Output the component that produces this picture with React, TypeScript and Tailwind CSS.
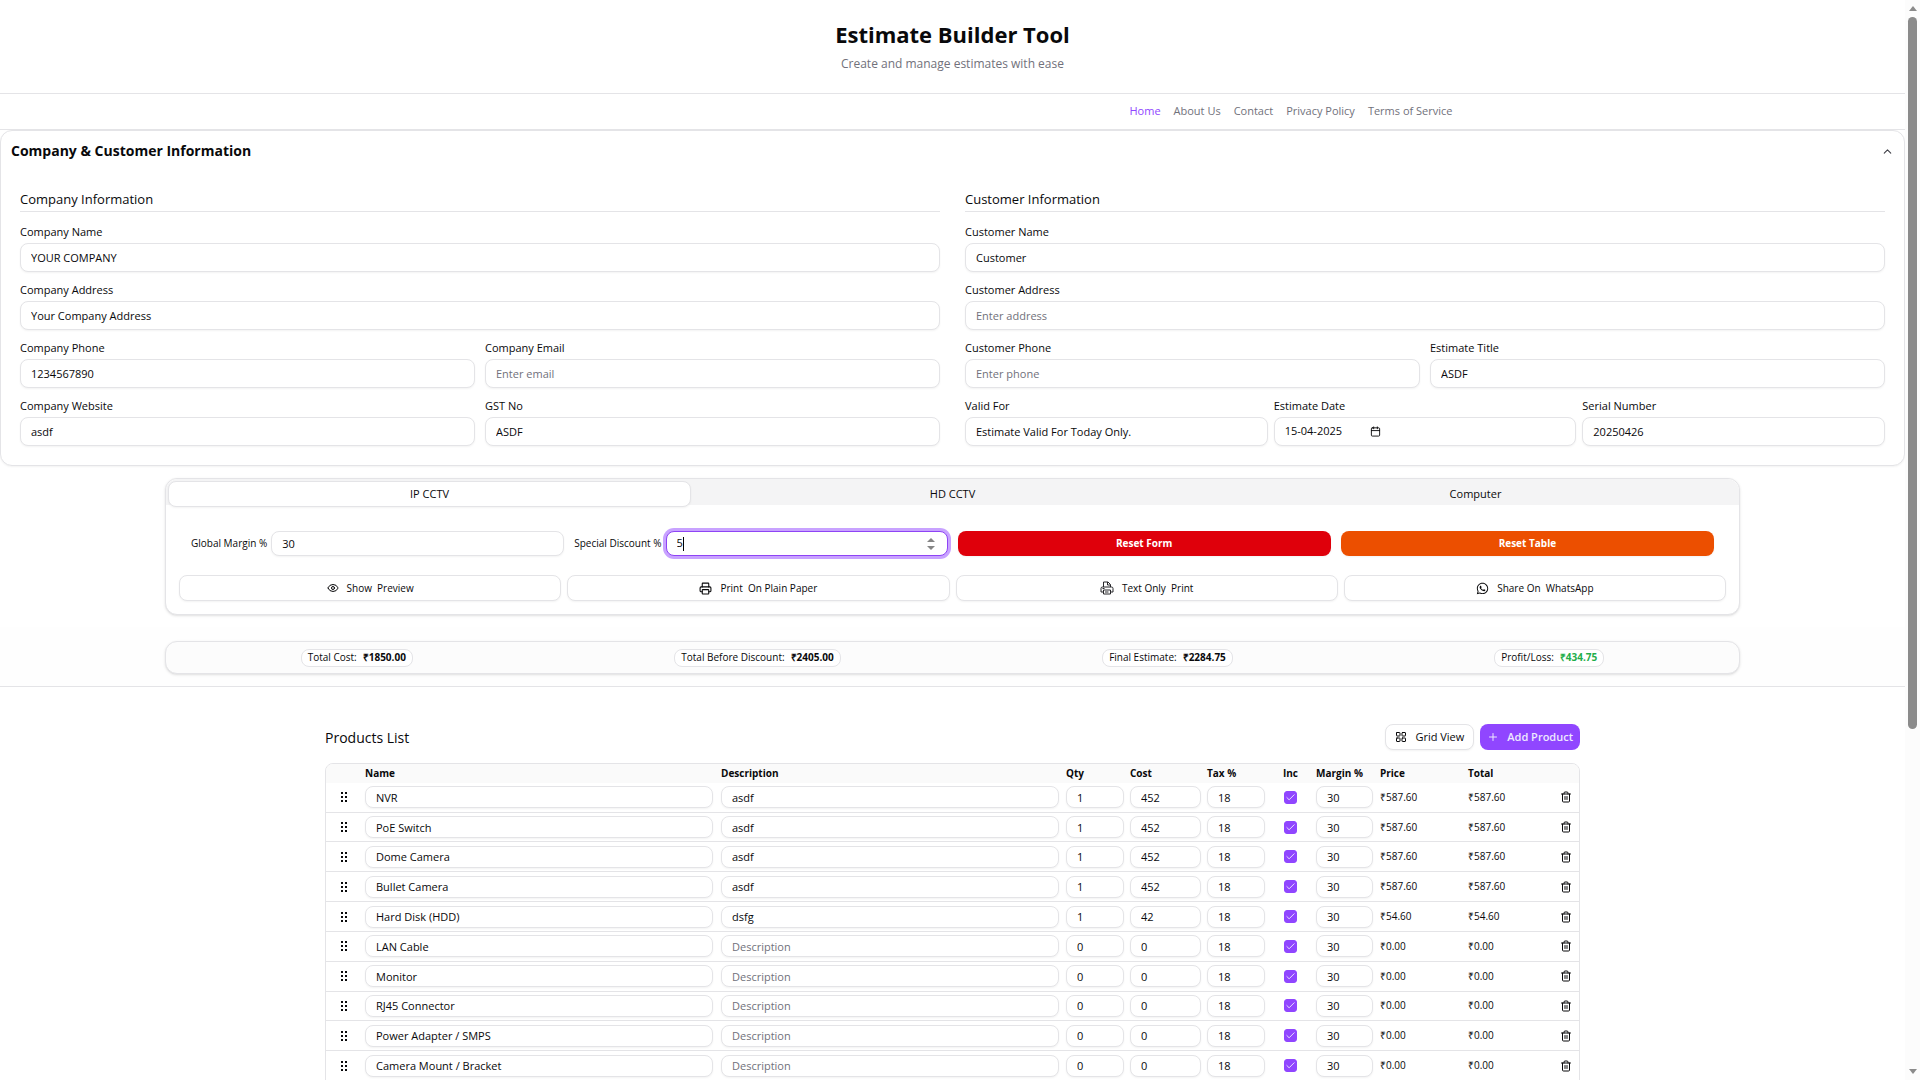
import React, { useState } from 'react';
import { Calendar, Check, ChevronUp, Eye, LayoutGrid, Plus, Printer, Trash2 } from 'lucide-react';
import { FaWhatsapp } from 'react-icons/fa';

interface FieldProps {
  id: string;
  label: string;
  value?: string;
  placeholder?: string;
}

const navLinks = ['Home', 'About Us', 'Contact', 'Privacy Policy', 'Terms of Service'];
const tabs = ['IP CCTV', 'HD CCTV', 'Computer'];

const products = [
  { name: 'NVR', desc: 'asdf', qty: 1, cost: 452, total: '587.60' },
  { name: 'PoE Switch', desc: 'asdf', qty: 1, cost: 452, total: '587.60' },
  { name: 'Dome Camera', desc: 'asdf', qty: 1, cost: 452, total: '587.60' },
  { name: 'Bullet Camera', desc: 'asdf', qty: 1, cost: 452, total: '587.60' },
  { name: 'Hard Disk (HDD)', desc: 'dsfg', qty: 1, cost: 42, total: '54.60' },
  { name: 'LAN Cable', desc: '', qty: 0, cost: 0, total: '0.00' },
  { name: 'Monitor', desc: '', qty: 0, cost: 0, total: '0.00' },
  { name: 'RJ45 Connector', desc: '', qty: 0, cost: 0, total: '0.00' },
  { name: 'Power Adapter / SMPS', desc: '', qty: 0, cost: 0, total: '0.00' },
  { name: 'Camera Mount / Bracket', desc: '', qty: 0, cost: 0, total: '0.00' },
];

const inputBase =
  'w-full min-w-0 rounded-lg border border-zinc-200 bg-white px-2.5 text-[11px] shadow-xs outline-none placeholder:text-zinc-500';

function Field({ id, label, value, placeholder }: FieldProps) {
  return (
    <div className="min-w-0">
      <label htmlFor={id} className="mb-[3px] block text-[11px] leading-4 font-medium">{label}</label>
      <input id={id} defaultValue={value} placeholder={placeholder} className={`${inputBase} h-[29px]`} />
    </div>
  );
}

function DateField({ id, label, value }: FieldProps) {
  return (
    <div className="min-w-0">
      <label htmlFor={id} className="mb-[3px] block text-[11px] leading-4 font-medium">{label}</label>
      <div className="flex h-[29px] items-center rounded-lg border border-zinc-200 bg-white px-2.5 shadow-xs">
        <input id={id} defaultValue={value} className="w-[85px] text-[11px] outline-none" />
        <button type="button" aria-label="Pick a date">
          <Calendar size={11} />
        </button>
      </div>
    </div>
  );
}

function CellInput({ label, value, placeholder }: { label: string; value: string | number; placeholder?: string }) {
  return (
    <input aria-label={label} defaultValue={value} placeholder={placeholder} className={`${inputBase} block h-[22px]`} />
  );
}

function ActionButton({ icon, children }: { icon: React.ReactNode; children: React.ReactNode }) {
  return (
    <button
      type="button"
      className="flex h-[26px] items-center justify-center gap-2 rounded-lg border border-zinc-200 bg-white text-[10px] font-medium shadow-xs"
    >
      {icon}
      {children}
    </button>
  );
}

function Badge({ label, value, className = '' }: { label: string; value: string; className?: string }) {
  return (
    <div className="flex h-[18px] items-center gap-1.5 rounded-lg border border-zinc-200 bg-white px-1.5 text-[10px]">
      <span>{label}</span>
      <span className={`font-bold ${className}`}>{value}</span>
    </div>
  );
}

function DragHandle() {
  return (
    <svg width="6" height="10" viewBox="0 0 6 10" fill="currentColor" className="mx-auto">
      {[0, 4, 8].map(y => (
        <g key={y}>
          <rect x="0" y={y} width="2" height="2" />
          <rect x="4" y={y} width="2" height="2" />
        </g>
      ))}
    </svg>
  );
}

function DocumentPrinter() {
  return (
    <svg width="14" height="14" viewBox="0 0 28 28" fill="none" stroke="currentColor" strokeWidth="2" strokeLinejoin="round" className="text-zinc-800">
      <path d="M7 12V2h9l5 5v5" />
      <path d="M15 2v6h6" />
      <path d="M7 22H2V15a3 3 0 0 1 3-3h18a3 3 0 0 1 3 3v7h-5" />
      <path d="M7 18h14v8H7z" />
      <path d="M10 22h7M5 15h4" />
    </svg>
  );
}

function InfoCard() {
  return (
    <section className="rounded-xl border border-zinc-200 bg-white pb-[19px] shadow-xs">
      <div className="flex h-10 items-center justify-between px-2.5">
        <h2 className="text-sm font-bold">Company &amp; Customer Information</h2>
        <button type="button" aria-label="Collapse" className="text-zinc-700">
          <ChevronUp size={13} />
        </button>
      </div>
      <div className="grid grid-cols-2 gap-[25px] px-[19px] pt-[19px]">
        <div className="flex flex-col gap-2.5">
          <h3 className="mb-0.5 border-b border-zinc-200 pb-[3px] text-[13px] leading-[18px] font-medium">Company Information</h3>
          <Field id="company-name" label="Company Name" value="YOUR COMPANY" />
          <Field id="company-address" label="Company Address" value="Your Company Address" />
          <div className="grid grid-cols-2 gap-2.5">
            <Field id="company-phone" label="Company Phone" value="1234567890" />
            <Field id="company-email" label="Company Email" placeholder="Enter email" />
          </div>
          <div className="grid grid-cols-2 gap-2.5">
            <Field id="company-website" label="Company Website" value="asdf" />
            <Field id="gst-no" label="GST No" value="ASDF" />
          </div>
        </div>
        <div className="flex flex-col gap-2.5">
          <h3 className="mb-0.5 border-b border-zinc-200 pb-[3px] text-[13px] leading-[18px] font-medium">Customer Information</h3>
          <Field id="customer-name" label="Customer Name" value="Customer" />
          <Field id="customer-address" label="Customer Address" placeholder="Enter address" />
          <div className="grid grid-cols-2 gap-2.5">
            <Field id="customer-phone" label="Customer Phone" placeholder="Enter phone" />
            <Field id="estimate-title" label="Estimate Title" value="ASDF" />
          </div>
          <div className="grid grid-cols-3 gap-1.5">
            <Field id="valid-for" label="Valid For" value="Estimate Valid For Today Only." />
            <DateField id="estimate-date" label="Estimate Date" value="15-04-2025" />
            <Field id="serial-number" label="Serial Number" value="20250426" />
          </div>
        </div>
      </div>
    </section>
  );
}

function Controls() {
  const [active, setActive] = useState('IP CCTV');

  return (
    <section className="mx-auto mt-3 w-full max-w-[1575px] rounded-xl border border-zinc-200 bg-white shadow-sm">
      <div role="tablist" className="grid h-[26px] grid-cols-3 rounded-t-xl bg-zinc-100 px-0.5 pt-0.5">
        {tabs.map(tab => (
          <button
            key={tab}
            type="button"
            role="tab"
            aria-selected={tab === active}
            onClick={() => setActive(tab)}
            className={`h-[26px] rounded-lg text-[11px] font-medium ${tab === active ? 'border border-zinc-200 bg-white shadow-xs' : ''}`}
          >
            {tab}
          </button>
        ))}
      </div>
      <div className="grid grid-cols-4 gap-2.5 px-[25px] pt-[26px]">
        <div className="flex items-center gap-1">
          <label htmlFor="global-margin" className="shrink-0 text-[10px] font-medium">Global Margin %</label>
          <input id="global-margin" defaultValue="30" className={`${inputBase} h-[25px]`} />
        </div>
        <div className="flex items-center gap-1">
          <label htmlFor="special-discount" className="shrink-0 text-[10px] font-medium">Special Discount %</label>
          <div className="flex h-[25px] flex-1 items-center rounded-lg border border-[#8e44f5] bg-white px-2.5 ring-3 ring-[#c8a2ff]">
            <input id="special-discount" defaultValue="5" className="field-sizing-content text-[11px] outline-none" />
            <span className="h-3.5 w-px bg-black" />
            <svg width="8" height="14" viewBox="0 0 8 14" fill="#858585" className="mr-0.5 ml-auto">
              <path d="M0 5L4 1L8 5Z M0 9L4 13L8 9Z" />
            </svg>
          </div>
        </div>
        <button type="button" className="h-[25px] rounded-lg bg-[#df000b] text-[10px] font-bold text-white shadow-xs">Reset Form</button>
        <button type="button" className="h-[25px] rounded-lg bg-[#ec4f00] text-[10px] font-bold text-white shadow-xs">Reset Table</button>
      </div>
      <div className="grid grid-cols-4 gap-1.5 px-[13px] pt-[19px] pb-[13px]">
        <ActionButton icon={<Eye size={12} />}><span>Show&nbsp; Preview</span></ActionButton>
        <ActionButton icon={<Printer size={13} />}><span>Print&nbsp; On Plain Paper</span></ActionButton>
        <ActionButton icon={<DocumentPrinter />}><span>Text Only&nbsp; Print</span></ActionButton>
        <ActionButton icon={<FaWhatsapp size={13} />}><span>Share On&nbsp; WhatsApp</span></ActionButton>
      </div>
    </section>
  );
}

function Products() {
  return (
    <section className="mx-auto w-full max-w-[1255px] pt-[37px]">
      <div className="flex items-center justify-between">
        <h2 className="text-[14px] font-medium">Products List</h2>
        <div className="flex gap-1.5">
          <button type="button" className="flex h-[26px] items-center gap-2 rounded-lg border border-zinc-200 bg-white px-[9px] text-[11px] font-medium shadow-xs">
            <LayoutGrid size={12} />
            Grid View
          </button>
          <button type="button" className="flex h-[26px] items-center gap-2 rounded-lg bg-[#9046ff] px-[7px] text-[11px] font-semibold text-violet-100">
            <Plus size={12} />
            Add Product
          </button>
        </div>
      </div>
      <div className="mt-[13px] overflow-hidden rounded-t-lg border border-zinc-200">
        <table className="h-[317px] w-full table-fixed text-left text-[10px]">
          <thead className="bg-zinc-50">
            <tr className="h-[19px]">
              <th className="w-[35px]" aria-label="Move" />
              <th className="px-1 font-bold">Name</th>
              <th className="w-[346px] px-1 font-bold">Description</th>
              <th className="w-16 px-[3px] font-bold">Qty</th>
              <th className="w-[77px] px-[3px] font-bold">Cost</th>
              <th className="w-16 px-[3px] font-bold">Tax %</th>
              <th className="w-[45px] text-center font-bold">Inc</th>
              <th className="w-[63px] px-[3px] font-bold">Margin %</th>
              <th className="w-[88px] px-1 font-bold">Price</th>
              <th className="w-[88px] px-1 font-bold">Total</th>
              <th className="w-[27px]" aria-label="Remove" />
            </tr>
          </thead>
          <tbody>
            {products.map(p => (
              <tr key={p.name} className="border-b border-zinc-200">
                <td><DragHandle /></td>
                <td className="px-1"><CellInput label="Name" value={p.name} /></td>
                <td className="px-1"><CellInput label="Description" value={p.desc} placeholder="Description" /></td>
                <td className="px-[3px]"><CellInput label="Quantity" value={p.qty} /></td>
                <td className="px-[3px]"><CellInput label="Cost" value={p.cost} /></td>
                <td className="px-[3px]"><CellInput label="Tax" value={18} /></td>
                <td>
                  <span className="mx-auto grid size-[13px] place-items-center">
                    <input
                      type="checkbox"
                      defaultChecked
                      aria-label="Include"
                      className="col-start-1 row-start-1 size-[13px] appearance-none rounded-[3px] border border-zinc-300 checked:border-[#9046ff] checked:bg-[#9046ff]"
                    />
                    <Check size={11} className="pointer-events-none col-start-1 row-start-1 text-violet-100" />
                  </span>
                </td>
                <td className="px-[3px]"><CellInput label="Margin" value={30} /></td>
                <td className="px-1">₹{p.total}</td>
                <td className="px-1">₹{p.total}</td>
                <td>
                  <button type="button" aria-label="Delete" className="mx-auto block">
                    <Trash2 size={12} />
                  </button>
                </td>
              </tr>
            ))}
          </tbody>
        </table>
      </div>
    </section>
  );
}

function ScrollRail() {
  return (
    <div className="flex w-[15px] shrink-0 flex-col items-center bg-[#fcfcfc] py-1.5 text-[#8b8b8b]">
      <svg width="8" height="5" viewBox="0 0 8 5" fill="currentColor"><path d="M0 5L4 0L8 5Z" /></svg>
      <div className="mt-1.5 h-[712px] w-[9px] rounded-full bg-[#8b8b8b]" />
      <svg width="8" height="5" viewBox="0 0 8 5" fill="currentColor" className="mt-auto"><path d="M0 0L4 5L8 0Z" /></svg>
    </div>
  );
}

export default function App() {
  return (
    <div className="flex h-screen overflow-hidden bg-white font-['Open_Sans',sans-serif] text-zinc-950">
      <main className="min-w-0 flex-1 overflow-hidden">
        <header className="flex h-[94px] flex-col items-center border-b border-zinc-200 pt-[18px] text-center">
          <h1 className="text-[22px] leading-8 font-bold">Estimate Builder Tool</h1>
          <p className="mt-1 text-[12px] leading-5 text-zinc-500">Create and manage estimates with ease</p>
        </header>
        <div className="border-b border-zinc-200">
          <nav className="mx-auto flex h-[35px] max-w-5xl items-center justify-end gap-[13px] px-3 text-[11px] font-medium text-zinc-500">
            {navLinks.map(link => (
              <a key={link} href="#" className={link === 'Home' ? 'text-[#9046ff]' : ''}>{link}</a>
            ))}
          </nav>
        </div>
        <InfoCard />
        <Controls />
        <div className="mt-3 border-b border-zinc-200 bg-[#fefefe] pt-3.5 pb-3">
          <div className="mx-auto flex h-[33px] max-w-[1575px] items-center justify-around rounded-xl border border-zinc-200 bg-[#fcfcfc] px-1 shadow-sm">
            <Badge label="Total Cost:" value="₹1850.00" />
            <Badge label="Total Before Discount:" value="₹2405.00" />
            <Badge label="Final Estimate:" value="₹2284.75" />
            <Badge label="Profit/Loss:" value="₹434.75" className="text-[#1fae4b]" />
          </div>
        </div>
        <Products />
      </main>
      <ScrollRail />
    </div>
  );
}
